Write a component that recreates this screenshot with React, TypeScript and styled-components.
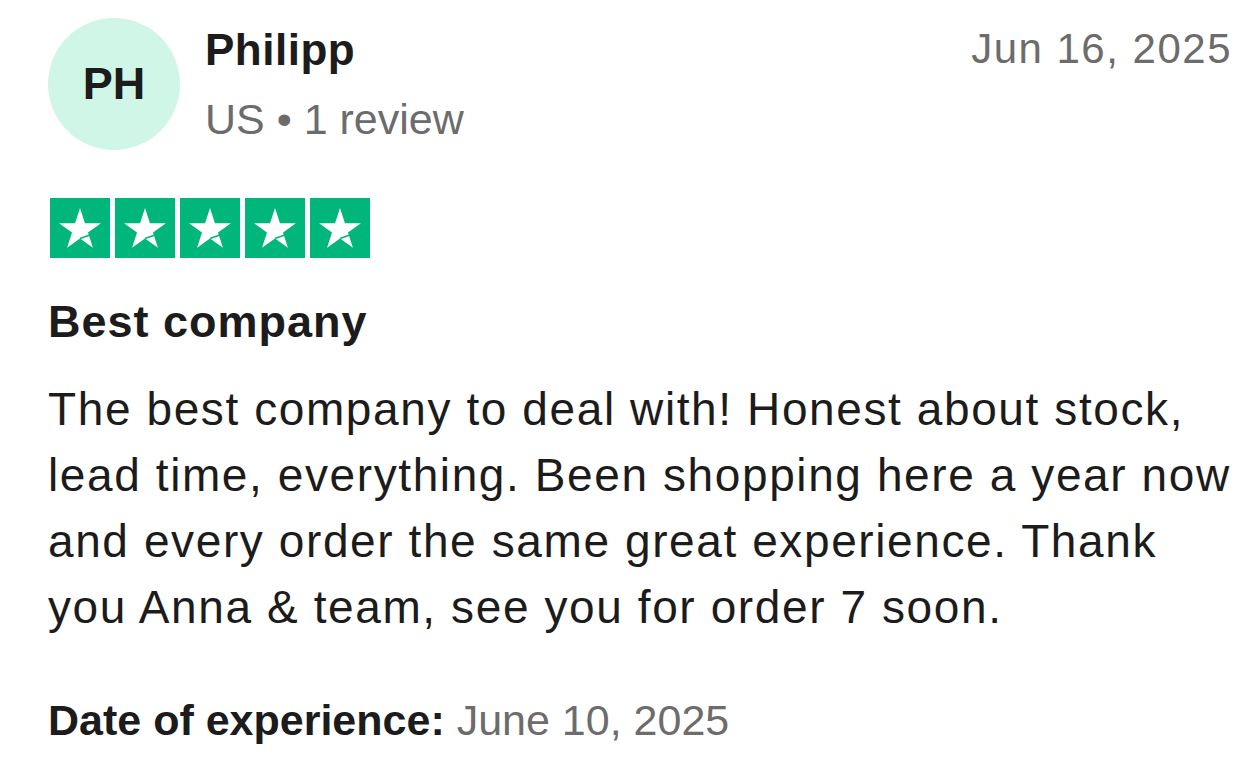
import styled, { createGlobalStyle } from "styled-components";

const GlobalStyle = createGlobalStyle`
  body {
    margin: 0;
    background: #ffffff;
    font-family: "Liberation Sans", Arial, Helvetica, sans-serif;
    color: #1c1c1c;
  }
`;

const Card = styled.article`
  padding: 18px 21px 0 48px;
  display: flex;
  flex-direction: column;
`;

const Header = styled.header`
  display: flex;
  align-items: flex-start;
`;

const Avatar = styled.div`
  width: 132px;
  height: 132px;
  border-radius: 50%;
  background: #cff6e7;
  display: flex;
  align-items: center;
  justify-content: center;
  font-weight: 700;
  font-size: 45px;
  color: #1c1c1c;
  flex-shrink: 0;
`;

const Consumer = styled.div`
  margin-left: 25px;
  display: flex;
  flex-direction: column;
  flex: 1;
`;

const Name = styled.div`
  font-size: 44px;
  font-weight: 700;
  letter-spacing: 0.5px;
  line-height: 64px;
`;

const Meta = styled.div`
  margin-top: 6px;
  font-size: 43px;
  color: #6c6c6c;
  line-height: 62px;
`;

const PostedDate = styled.time`
  margin-top: -1px;
  font-size: 42px;
  letter-spacing: 1.5px;
  color: #6c6c6c;
  line-height: 64px;
`;

const Stars = styled.div`
  display: flex;
  gap: 5px;
  margin: 48px 0 0 2px;
`;

const StarBox = styled.div`
  width: 60px;
  height: 60px;
  background: #00b67a;
`;

const Title = styled.h2`
  margin: 36px 0 0;
  font-size: 45px;
  font-weight: 700;
  letter-spacing: 1px;
  line-height: 56px;
`;

const Body = styled.p`
  margin: 26px 0 0;
  font-size: 46px;
  letter-spacing: 1.6px;
  line-height: 66px;
`;

const Experience = styled.p`
  margin: 50px 0 0;
  font-size: 43px;
  line-height: 60px;
  color: #6c6c6c;

  strong {
    color: #1c1c1c;
    font-weight: 700;
  }
`;

function Star() {
  return (
    <svg width="60" height="60" viewBox="0 0 60 60">
      <polygon
        points="30,10 34.94,25.2 50.92,25.2 37.99,34.6 42.94,49.8 30,40.4 17.06,49.8 22.01,34.6 9.08,25.2 25.06,25.2"
        fill="#ffffff"
      />
      <path d="M30 40.6 L39.2 37.2" stroke="#00b67a" strokeWidth="1.6" />
    </svg>
  );
}

export default function App() {
  return (
    <>
      <GlobalStyle />
      <Card>
        <Header>
          <Avatar>PH</Avatar>
          <Consumer>
            <Name>Philipp</Name>
            <Meta>US • 1 review</Meta>
          </Consumer>
          <PostedDate>Jun 16, 2025</PostedDate>
        </Header>
        <Stars>
          {[0, 1, 2, 3, 4].map((i) => (
            <StarBox key={i}>
              <Star />
            </StarBox>
          ))}
        </Stars>
        <Title>Best company</Title>
        <Body>
          The best company to deal with! Honest about stock, lead time,
          everything. Been shopping here a year now and every order the same
          great experience. Thank you Anna &amp; team, see you for order 7 soon.
        </Body>
        <Experience>
          <strong>Date of experience:</strong> June 10, 2025
        </Experience>
      </Card>
    </>
  );
}
